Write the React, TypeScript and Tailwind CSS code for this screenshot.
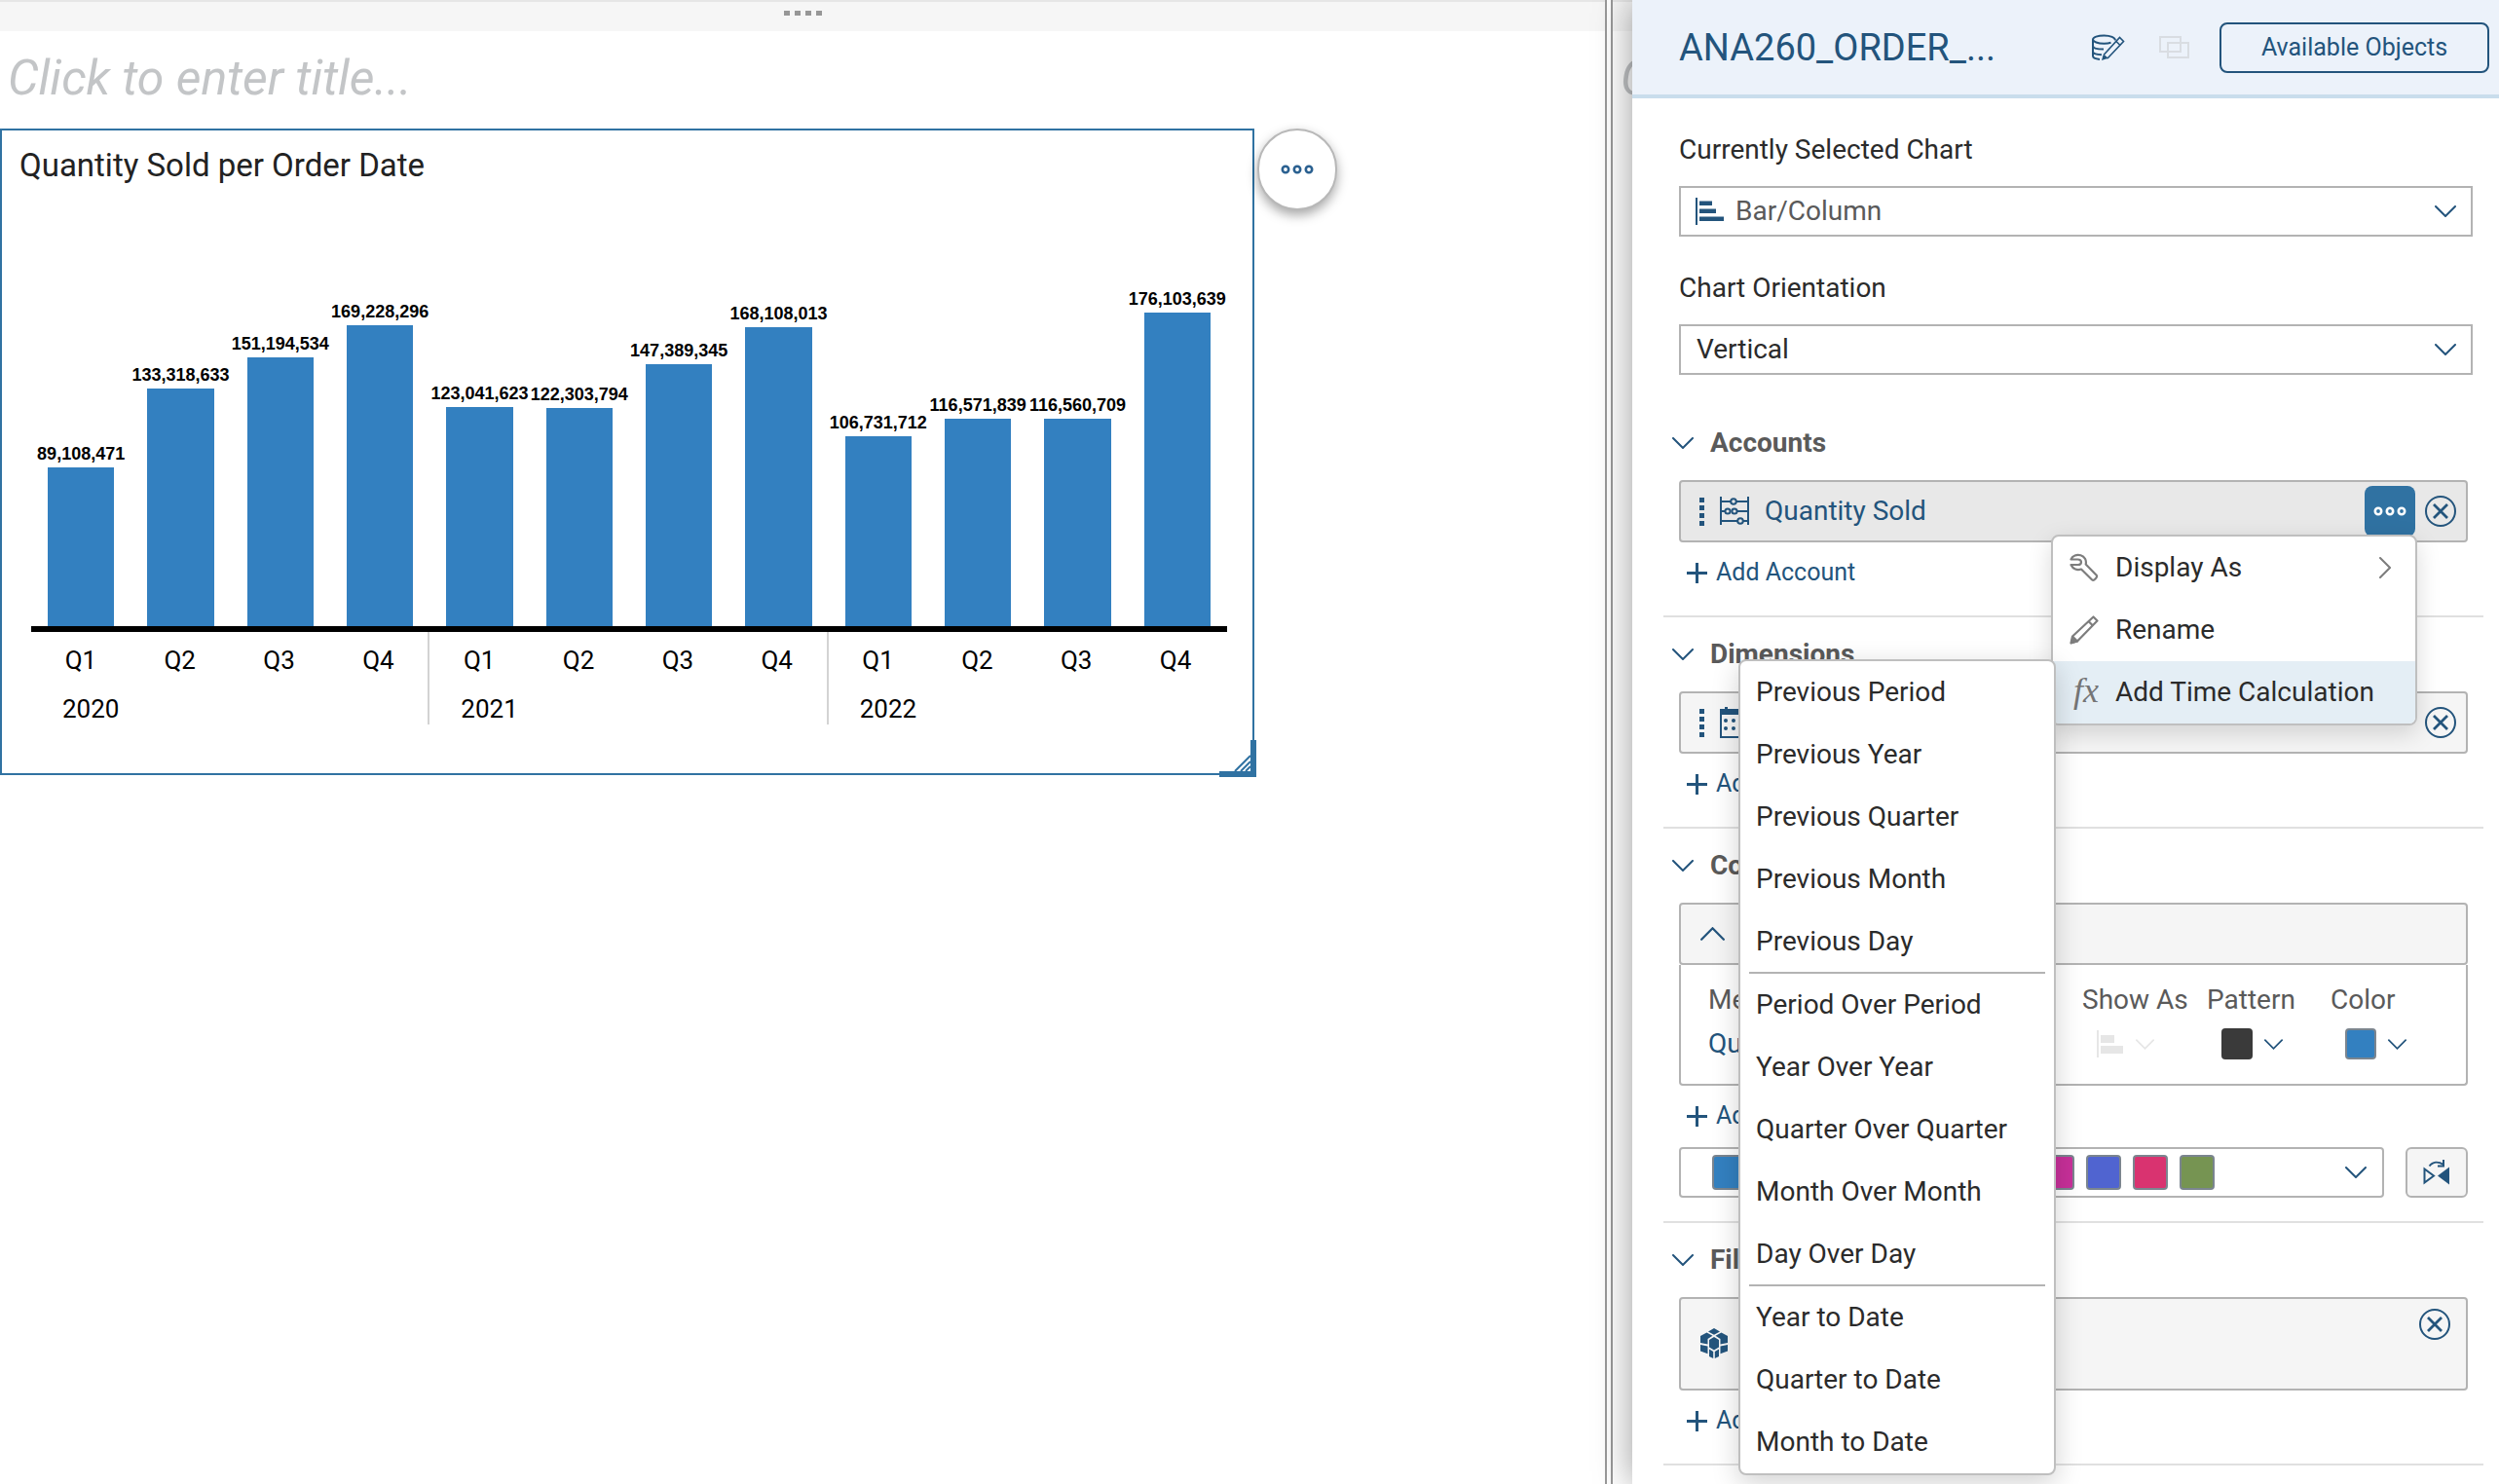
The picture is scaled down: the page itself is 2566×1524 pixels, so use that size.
import type { ReactNode } from 'react'

type Quarter = { label: string; value: number }
type Year = { year: number; quarters: Quarter[] }

const YEARS: Year[] = [
    {
        year: 2020,
        quarters: [
            { label: 'Q1', value: 89108471 },
            { label: 'Q2', value: 133318633 },
            { label: 'Q3', value: 151194534 },
            { label: 'Q4', value: 169228296 },
        ],
    },
    {
        year: 2021,
        quarters: [
            { label: 'Q1', value: 123041623 },
            { label: 'Q2', value: 122303794 },
            { label: 'Q3', value: 147389345 },
            { label: 'Q4', value: 168108013 },
        ],
    },
    {
        year: 2022,
        quarters: [
            { label: 'Q1', value: 106731712 },
            { label: 'Q2', value: 116571839 },
            { label: 'Q3', value: 116560709 },
            { label: 'Q4', value: 176103639 },
        ],
    },
]

const TIME_CALCULATIONS = [
    ['Previous Period', 'Previous Year', 'Previous Quarter', 'Previous Month', 'Previous Day'],
    ['Period Over Period', 'Year Over Year', 'Quarter Over Quarter', 'Month Over Month', 'Day Over Day'],
    ['Year to Date', 'Quarter to Date', 'Month to Date'],
]

const PALETTE = [
    'bg-[#3380c0]',
    'bg-[#e8743b]',
    'bg-[#19a979]',
    'bg-[#ed4a7b]',
    'bg-[#945ecf]',
    'bg-[#13a4b4]',
    'bg-[#525df4]',
    'bg-[#c8309a]',
    'bg-[#5064d0]',
    'bg-[#d93370]',
    'bg-[#769452]',
]

// Pixels per million units sold
const BAR_SCALE = 1.828

function Chevron({ className = 'w-[22px] h-[12px]' }: { className?: string }) {
    return (
        <svg viewBox="0 0 22 12" className={`${className} shrink-0`} fill="none" stroke="currentColor" strokeWidth="2" strokeLinecap="round">
            <path d="M1 1l10 10L21 1" />
        </svg>
    )
}

function EllipsisIcon({ className }: { className: string }) {
    return (
        <svg viewBox="0 0 34 10" className={className} fill="none" stroke="currentColor" strokeWidth="2.6">
            <circle cx="5" cy="5" r="3.2" />
            <circle cx="17" cy="5" r="3.2" />
            <circle cx="29" cy="5" r="3.2" />
        </svg>
    )
}

function DeclineIcon() {
    return (
        <svg viewBox="0 0 32 32" className="w-8 h-8" fill="none" stroke="currentColor" strokeWidth="2">
            <circle cx="16" cy="16" r="15" />
            <path d="M9 9l14 14M23 9L9 23" strokeWidth="2.8" />
        </svg>
    )
}

function BarChartIcon() {
    return (
        <svg viewBox="0 0 30 30" className="w-[30px] h-[30px]" fill="currentColor">
            <path d="M0 1h2v28H0zM4 4.500h13v4.500H4zM4 12.500h17v4.500H4zM4 20.500h25v4.500H4z" />
        </svg>
    )
}

function GripIcon() {
    return (
        <svg viewBox="0 0 6 30" className="w-[6px] h-[30px]" fill="currentColor">
            <path d="M0 1h5v5H0zM0 9h5v5H0zM0 17h5v5H0zM0 25h5v5H0z" />
        </svg>
    )
}

function AbacusIcon() {
    return (
        <svg viewBox="0 0 30 30" className="w-[30px] h-[30px]" fill="none" stroke="currentColor" strokeWidth="2">
            <path d="M1 0v29M29 0v29M1 5h10M17 5h12M1 15h4M18 15h11M1 25h17M24 25h5" />
            <circle cx="14" cy="5" r="2.800" />
            <circle cx="8" cy="15" r="2.600" />
            <circle cx="15" cy="15" r="2.600" />
            <circle cx="21" cy="25" r="2.800" />
        </svg>
    )
}

function CalendarIcon() {
    return (
        <svg viewBox="0 0 30 32" className="w-[30px] h-8" fill="currentColor">
            <path d="M1 3h28v28H1z" fill="none" stroke="currentColor" strokeWidth="2" />
            <path d="M0 2h5V0h3v2h14V0h3v2h5v6H0z" />
            <circle cx="6" cy="14" r="2" />
            <circle cx="14" cy="14" r="2" />
            <circle cx="22" cy="14" r="2" />
            <circle cx="6" cy="22" r="2" />
            <circle cx="14" cy="22" r="2" />
            <circle cx="22" cy="22" r="2" />
        </svg>
    )
}

function EditDataIcon() {
    return (
        <svg viewBox="0 0 34 28" className="w-[34px] h-7" fill="none" stroke="currentColor" strokeWidth="2">
            <path d="M24 6.500c0-2.800-5-5-11.500-5S1 3.200 1 5.500s5 4.200 11.500 4.200c3 0 5-.3 7-1" />
            <path d="M1 5.500v17c0 1.800 3 3 7 3.400M1 12c0 2.300 5 3.600 11 3.600M1 18c0 1.800 4 3 9 3.200" />
            <path d="M12 21.500L28.500 3.500l4 4L16 25" strokeWidth="1.600" />
            <path d="M25 7.500l4 4M12 21.500l4 3.500" strokeWidth="1.600" />
            <path d="M10 27l1.500-5.500 4.500 3.500z" fill="currentColor" stroke="none" />
        </svg>
    )
}

function DuplicateIcon() {
    return (
        <svg viewBox="0 0 32 24" className="w-8 h-6" fill="none" stroke="currentColor" strokeWidth="2">
            <path d="M1 1h21v15H1zM9 7h21v15H9z" />
        </svg>
    )
}

function WrenchIcon() {
    return (
        <svg viewBox="0 0 30 30" className="w-[30px] h-[30px]" fill="none" stroke="currentColor" strokeWidth="2.200" strokeLinejoin="round">
            <path d="M1.500 6.500c1.500-4 6-5.500 10-4.300 4 1.200 6.200 5.300 5.200 9.300l11 11.300c1.500 1.600-2.600 6.200-4.500 4.700L12 16.500c-4 1.400-8.500 0-10.500-4.500h7c2.500 0 3.500-1.500 3.500-2.800S11 6.500 8.500 6.500z" />
        </svg>
    )
}

function PencilIcon() {
    return (
        <svg viewBox="0 0 30 30" className="w-[30px] h-[30px]" fill="none" stroke="currentColor" strokeWidth="2.200" strokeLinejoin="round">
            <path d="M3 21.500L24.500 1.500l4 4L8 26.500l-6.500 2z" />
            <path d="M19.500 6l4.500 4.500" />
            <path d="M2 28l1.500-6 4.500 4.500z" fill="currentColor" />
        </svg>
    )
}

function FlipIcon() {
    return (
        <svg viewBox="0 0 28 26" className="w-7 h-[26px]" fill="none" stroke="currentColor" strokeWidth="2">
            <path d="M1.500 9.500v14L11 16.500z" />
            <path d="M27 7.500v18L15 16.500z" fill="currentColor" stroke="none" />
            <path d="M6.500 6.500c3.500-4.500 9-5 14.500-1.500" />
            <path d="M21 0v6.500h-6" />
        </svg>
    )
}

function CubeIcon() {
    return (
        <svg viewBox="0 0 28 32" className="w-7 h-8" fill="currentColor">
            <path d="M14 0l6 3.500-6 3.200-6-3.200zM6.500 4.500l6 3.200-5 3.300v5.500L0 15V8zM21.500 4.500L28 8v7l-7.500 1.500V11l-5-3.300zM14 9l5 3v7.500L14 22.500l-5-3V12zM0 17l7.500 1.500v7.800L0 23.500zM28 17l-7.500 1.500v7.800L28 23.500zM9 21.500l4.200 2.500v7L9 29zM19 21.500L14.800 24v7l4.200-2z" />
        </svg>
    )
}

function PageStrip({ children }: { children?: ReactNode }) {
    return (
        <div className="h-8 flex justify-center bg-[#f6f6f6] border-t-2 border-[#e6e6e6]">
            {children}
        </div>
    )
}

function PageTitle() {
    return (
        <input
            aria-label="Page title"
            placeholder="Click to enter title..."
            className="block w-[600px] h-16 mt-4 mb-5 px-2 text-[50px] italic outline-none placeholder:text-[#c3c5c7]"
        />
    )
}

function QuantityChart() {
    return (
        <div className="flex flex-col">
            <div className="flex h-[394px] border-b-[6px] border-black">
                {YEARS.map(({ year, quarters }) => (
                    <div key={year} className="flex-1 flex items-end">
                        {quarters.map(({ label, value }) => (
                            <div key={label} className="flex-1 flex flex-col items-center">
                                <span className="font-['Liberation_Sans',sans-serif] font-bold text-[18px] leading-[28px] text-black">
                                    {value.toLocaleString('en-US')}
                                </span>
                                <div className="w-2/3 bg-[#3380c0]" style={{ height: Math.round((value / 1e6) * BAR_SCALE) }} />
                            </div>
                        ))}
                    </div>
                ))}
            </div>
            <div className="flex text-[26px] text-black">
                {YEARS.map(({ year, quarters }) => (
                    <div key={year} className="flex-1 h-[95px] pt-2 border-r-2 border-[#d3d3d3] last:border-transparent">
                        <div className="flex leading-[42px]">
                            {quarters.map(({ label }) => (
                                <span key={label} className="flex-1 text-center">{label}</span>
                            ))}
                        </div>
                        <div className="pl-8 mt-2 leading-[42px]">{year}</div>
                    </div>
                ))}
            </div>
        </div>
    )
}

function ChartWidget() {
    return (
        <div className="relative mr-[360px] h-[664px] border-2 border-[#3072a2] pt-4">
            <h2 className="pl-[18px] mb-[65px] text-[33px] leading-[40px] text-[#222]">Quantity Sold per Order Date</h2>
            <div className="pl-[30px] pr-[26px]">
                <QuantityChart />
            </div>
            <button
                aria-label="Widget actions"
                className="absolute -top-[2px] left-full ml-[5px] w-[82px] h-[84px] rounded-full bg-white border-2 border-[#b8b8b8] shadow-[0_5px_12px_rgba(0,0,0,0.35)] flex items-center justify-center text-[#2a6090]"
            >
                <EllipsisIcon className="w-[34px] h-[10px]" />
            </button>
            <svg viewBox="0 0 38 38" className="absolute -bottom-1 -right-1 w-[38px] h-[38px] text-[#3072a2]" fill="currentColor">
                <path d="M32 0h6v38H0v-6h32z" />
                <path d="M16 32L32 16M22 32l10-10M27 32l5-5" stroke="currentColor" strokeWidth="2" />
            </svg>
        </div>
    )
}

function TimeCalculationMenu() {
    return (
        <div
            role="menu"
            className="absolute -top-[2px] right-[calc(100%-3px)] z-20 w-[326px] bg-white border-2 border-[#bfbfbf] rounded-lg shadow-[0_8px_28px_rgba(0,0,0,0.18)]"
        >
            {TIME_CALCULATIONS.map((group, index) => (
                <div key={group[0]}>
                    {index > 0 && <hr className="-mt-px mx-[9px] border-t-2 border-[#b3b3b3]" />}
                    {group.map(name => (
                        <button key={name} role="menuitem" className="block w-full h-16 pl-4 text-left">
                            {name}
                        </button>
                    ))}
                </div>
            ))}
        </div>
    )
}

function AccountMenu() {
    return (
        <div
            role="menu"
            className="absolute top-[50px] -right-[2px] z-10 w-[376px] bg-white border-2 border-[#bfbfbf] rounded-lg shadow-[0_8px_24px_rgba(0,0,0,0.15)] text-[#2b2b2b]"
        >
            <button role="menuitem" className="flex items-center w-full h-16 pl-[17px] pr-5 text-left">
                <span className="w-[47px] text-[#7d7d7d]"><WrenchIcon /></span>
                <span className="flex-1">Display As</span>
                <Chevron className="w-[22px] h-[12px] -rotate-90 text-[#7d7d7d]" />
            </button>
            <button role="menuitem" className="flex items-center w-full h-16 pl-[17px] text-left">
                <span className="w-[47px] text-[#7d7d7d]"><PencilIcon /></span>
                Rename
            </button>
            <div className="relative">
                <button role="menuitem" className="flex items-center w-full h-16 pl-[17px] rounded-b-md bg-[#e4eef5] text-left">
                    <span className="w-[47px] pl-1 pb-1 text-[#757575] font-['Liberation_Serif',serif] italic text-[36px] leading-none">fx</span>
                    Add Time Calculation
                </button>
                <TimeCalculationMenu />
            </div>
        </div>
    )
}

function BuilderSection({ title, addLabel, children, footer }: { title: string; addLabel: string; children: ReactNode; footer?: ReactNode }) {
    return (
        <section className="border-b-2 border-[#e0e0e0] mr-4 ml-8 pt-[18px] pb-6">
            <button className="flex items-center h-10 pl-[9px] text-[#23547c]">
                <Chevron />
                <span className="ml-[17px] font-bold text-[#5a5a5a]">{title}</span>
            </button>
            <div className="mt-[18px] ml-4 mr-4">{children}</div>
            <button className="flex items-center gap-[9px] h-10 mt-[11px] ml-6 text-[25px] text-[#23547c]">
                <svg viewBox="0 0 21 21" className="w-[21px] h-[21px]" stroke="currentColor" strokeWidth="3">
                    <path d="M10.500 0v21M0 10.500h21" />
                </svg>
                {addLabel}
            </button>
            {footer}
        </section>
    )
}

function LabeledSelect({ id, label, icon, value }: { id: string; label: string; icon?: ReactNode; value: string }) {
    return (
        <div className="ml-12 mr-[27px] mb-8">
            <label htmlFor={id} className="block leading-[42px]">{label}</label>
            <div className="relative mt-4 text-[#23547c]">
                {icon && <span className="absolute left-[17px] top-[11px]">{icon}</span>}
                <select
                    id={id}
                    className={
                        icon
                            ? 'block w-full h-[52px] pl-[56px] appearance-none border-2 border-[#b3b3b3] bg-white text-[#5a5a5a]'
                            : 'block w-full h-[52px] pl-4 appearance-none border-2 border-[#b3b3b3] bg-white text-[#2b2b2b]'
                    }
                >
                    <option>{value}</option>
                </select>
                <span className="absolute right-[17px] top-5 pointer-events-none"><Chevron /></span>
            </div>
        </div>
    )
}

function BuilderPanel() {
    return (
        <aside className="relative w-[890px] shrink-0 bg-white shadow-[0_0_36px_rgba(0,0,0,0.4)] text-[28px] text-[#2b2b2b]">
            <header className="flex items-center h-[101px] pl-12 pr-[10px] bg-[#ecf2fa] border-b-4 border-[#c9ddec] text-[#23547c]">
                <h1 className="flex-1 pt-[2px] text-[38px]">ANA260_ORDER_...</h1>
                <button aria-label="Edit data"><EditDataIcon /></button>
                <button aria-label="Duplicate" disabled className="ml-[35px] text-[#d9dde2]"><DuplicateIcon /></button>
                <button className="ml-[30px] w-[277px] h-[52px] border-2 rounded-lg border-[#23547c] text-[25px]">
                    Available Objects
                </button>
            </header>

            <div className="pt-8">
                <LabeledSelect id="chart-type" label="Currently Selected Chart" icon={<BarChartIcon />} value="Bar/Column" />
                <LabeledSelect id="orientation" label="Chart Orientation" value="Vertical" />
            </div>

            <BuilderSection title="Accounts" addLabel="Add Account">
                <div className="flex items-center h-16 pl-[19px] pr-[10px] border-2 border-[#b3b3b3] rounded bg-[#e8e8e8] text-[#23547c]">
                    <GripIcon />
                    <span className="ml-[15px]"><AbacusIcon /></span>
                    <span className="flex-1 ml-4">Quantity Sold</span>
                    <div className="relative">
                        <button aria-label="More" className="flex items-center justify-center w-[52px] h-[52px] rounded-lg bg-[#3072a2] text-white">
                            <EllipsisIcon className="w-[34px] h-[10px]" />
                        </button>
                        <AccountMenu />
                    </div>
                    <button aria-label="Remove" className="ml-[10px]"><DeclineIcon /></button>
                </div>
            </BuilderSection>

            <BuilderSection title="Dimensions" addLabel="Add Dimension">
                <div className="flex items-center h-16 pl-[19px] pr-[10px] border-2 border-[#b3b3b3] rounded bg-[#f5f5f5] text-[#23547c]">
                    <GripIcon />
                    <span className="ml-[15px]"><CalendarIcon /></span>
                    <span className="flex-1 ml-4">Order Date</span>
                    <button aria-label="Remove"><DeclineIcon /></button>
                </div>
            </BuilderSection>

            <BuilderSection
                title="Color"
                addLabel="Add Color"
                footer={
                    <div className="flex gap-[22px] mt-3 ml-4 mr-4">
                        <button aria-label="Color palette" className="flex-1 flex items-center gap-3 h-[52px] pl-8 pr-4 border-2 border-[#b3b3b3] rounded text-[#23547c]">
                            {PALETTE.map(color => (
                                <span key={color} className={`w-9 h-9 rounded border-2 border-[#7b858f] ${color}`} />
                            ))}
                            <span className="ml-auto"><Chevron /></span>
                        </button>
                        <button aria-label="Reverse palette" className="flex items-center justify-center w-16 h-[52px] border-2 border-[#b3b3b3] rounded-md bg-[#f5f5f5] text-[#23547c]">
                            <FlipIcon />
                        </button>
                    </div>
                }
            >
                <button aria-label="Collapse" className="flex items-center w-full h-16 pl-5 border-2 border-[#b3b3b3] rounded bg-[#f5f5f5] text-[#23547c]">
                    <Chevron className="w-[25px] h-[14px] rotate-180" />
                </button>
                <div className="pt-4 pb-4 border-2 border-t-0 border-[#b3b3b3] rounded-b">
                    <table className="w-full table-fixed text-left text-[#5a5a5a]">
                        <thead>
                            <tr className="h-10 leading-[40px]">
                                <th className="pl-7 font-normal">Measures</th>
                                <th className="w-[128px] font-normal whitespace-nowrap">Show As</th>
                                <th className="w-[127px] font-normal">Pattern</th>
                                <th className="w-[139px] font-normal">Color</th>
                            </tr>
                        </thead>
                        <tbody>
                            <tr className="h-[50px] leading-[50px] text-[#23547c]">
                                <td className="pl-7">Quantity Sold</td>
                                <td>
                                    <button aria-label="Show as" disabled className="flex items-center gap-3 ml-[15px] text-[#e6e6e6]">
                                        <svg viewBox="0 0 28 30" className="w-7 h-[30px]" fill="currentColor">
                                            <path d="M0 1h2v28H0zM4 6h14v8H4zM4 17h23v8H4z" />
                                        </svg>
                                        <Chevron className="w-[19px] h-[11px]" />
                                    </button>
                                </td>
                                <td>
                                    <button aria-label="Pattern" className="flex items-center gap-3 ml-[15px]">
                                        <span className="w-8 h-8 rounded bg-[#3a3a3a]" />
                                        <Chevron className="w-[19px] h-[11px]" />
                                    </button>
                                </td>
                                <td>
                                    <button aria-label="Color" className="flex items-center gap-3 ml-[15px]">
                                        <span className="w-8 h-8 rounded border-2 border-[#7b858f] bg-[#3380c0]" />
                                        <Chevron className="w-[19px] h-[11px]" />
                                    </button>
                                </td>
                            </tr>
                        </tbody>
                    </table>
                </div>
            </BuilderSection>

            <BuilderSection title="Filters" addLabel="Add Filters">
                <div className="flex items-start justify-between h-24 pl-5 pr-4 border-2 border-[#b3b3b3] rounded bg-[#f5f5f5] text-[#23547c]">
                    <span className="self-center"><CubeIcon /></span>
                    <button aria-label="Remove filter" className="mt-[10px]"><DeclineIcon /></button>
                </div>
            </BuilderSection>
        </aside>
    )
}

export default function App() {
    return (
        <div className="flex min-h-screen bg-white font-[Roboto,sans-serif] overflow-hidden">
            <main className="flex-1 min-w-0 border-r-2 border-[#999]">
                <PageStrip>
                    <div className="flex gap-[5px] mt-[9px]">
                        {[0, 1, 2, 3].map(dot => (
                            <span key={dot} className="w-[6px] h-[5px] bg-[#979797]" />
                        ))}
                    </div>
                </PageStrip>
                <PageTitle />
                <ChartWidget />
            </main>
            {/* Next page, mostly hidden behind the builder panel */}
            <section className="w-[22px] ml-1 shrink-0 border-l-2 border-[#999] overflow-hidden">
                <PageStrip />
                <PageTitle />
            </section>
            <BuilderPanel />
        </div>
    )
}
